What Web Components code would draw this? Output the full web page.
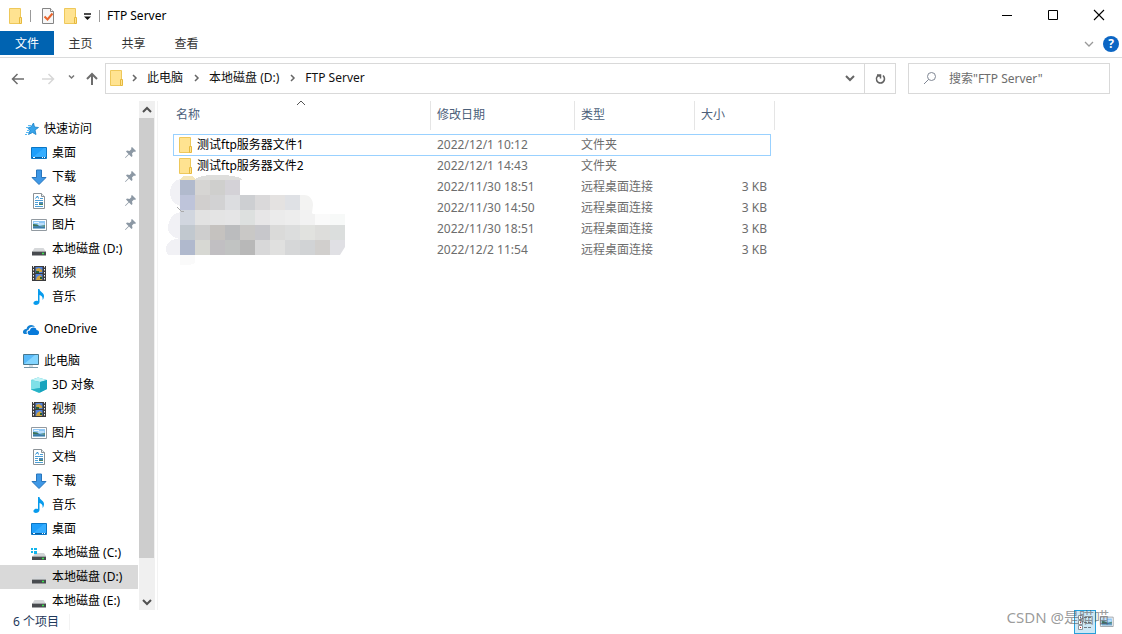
<!DOCTYPE html>
<html lang="zh-CN">
<head>
<meta charset="utf-8">
<title>FTP Server</title>
<style>
html, body { height: 100%; margin: 0; }
body { font: 12px/16px "Noto Sans", "Noto Sans CJK SC", sans-serif; color: #000; background: #fff; overflow: hidden; }
</style>
</head>
<body>
<explorer-window></explorer-window>
<script>
const ICONS = {
  folder: '<path d="M2.500 .5h11v15h-11z" fill="#ffe391" stroke="#eec85a"/><path d="M12.500 9.500h2v6h-2z" fill="#ffe391" stroke="#e6b93d"/>',
  check: '<path d="M2.500 .5h8l3 3v12h-11z" fill="#f7f7f7" stroke="#858585"/><path d="M10.500 .5v3h3" fill="#fff" stroke="#858585"/><path d="M4.500 8.500l3 3 5-6" fill="none" stroke="#e8642c" stroke-width="2"/>',
  star: '<path d="M10.500 2l1 4 4 .5-3.500 2.500 1 4.500-3.500-2-4 2 1.500-4L4.500 6.500 8 6z" fill="#38a4ea" stroke="#1681c8" stroke-width=".8"/><path d="M5 4.500h3M3 6.500h3M4 9.500h2M3 11.500h3M2 13.500h2" stroke="#5ab9f3"/>',
  desktop: '<path d="M.5 2.500h15v11H.5z" fill="#1e9ffb" stroke="#0b76c4"/><path d="M1 13L13 3h2v10z" fill="#35adff"/><path d="M1 12.500h14" stroke="#0b5e9e"/><path d="M2 12.500h2M11 12.500h1M13 12.500h1" stroke="#fff"/>',
  download: '<path d="M5.500 1h5v7.500H15L8 15.500 1 8.500h4.500z" fill="#3f98e6" stroke="#2876bd"/>',
  document: '<path d="M2.500 .5h8l3 3v12h-11z" fill="#fff" stroke="#8b9297"/><path d="M10.500 .5v3h3" fill="#e9edef" stroke="#8b9297"/><path d="M9 5.500h3M4 7.500h8M4 9.500h3M4 11.500h3M4 13.500h8" stroke="#4b9ed6"/><path d="M4.500 5.500l2-2.500 1 2.500" fill="none" stroke="#238bd0"/><path d="M8 9h4v3H8z" fill="#4a8bb5"/><path d="M8 11h4v1H8z" fill="#48845a"/>',
  picture: '<path d="M.5 2.500h15v11H.5z" fill="#fff" stroke="#929aa1"/><path d="M2 4h12v8H2z" fill="#8fc7f5"/><path d="M3 5.500h5M7 7h6" stroke="#e8f5ff"/><path d="M2 7l4 .5 3 2H2z" fill="#3d7458"/><path d="M2 9.500l6-.5 6 1v2H2z" fill="#3c7ba8"/><path d="M2 11.500h12" stroke="#8db9d4"/><path d="M9 9l5-1v2z" fill="#568c78"/>',
  drive: '<path d="M3.500 7h9l2.500 4H1z" fill="#d6d8da"/><path d="M1 10.500h14v4H1z" fill="#484b4f"/><path d="M1 10.500h14" stroke="#a3a6a8"/><path d="M11 12.500h2" stroke="#38e44b" stroke-width="1.500"/>',
  driveC: '<path d="M4.500 8h8.500l2 3H2z" fill="#d0d3d5"/><path d="M1 11h14v4H1z" fill="#484b4f"/><path d="M1 11.500h14" stroke="#a3a6a8"/><path d="M11 13.500h2" stroke="#38e44b" stroke-width="1.500"/><path d="M0 3h2v2H0zM3 3h3v2H3zM0 6h2v2H0zM3 6h3v3H3z" fill="#12b5ed"/>',
  video: '<path d="M1 1h14v15H1z" fill="#3b3b3b"/><path d="M2.500 1v15M13.500 1v15" stroke="#f3f3f3" stroke-dasharray="1.500 1.500"/><path d="M4.500 2h7v6h-7zM4.500 9h7v6h-7z" fill="#5484dc"/><path d="M5 4l3-1 3 2v2H6zM6 12l3-2 2 2v3H5z" fill="#d0a43d"/><path d="M5 6h3v2H5zM9 12h2v2H9z" fill="#275f37"/>',
  music: '<path d="M7 0h1.500c0 3 4.500 3.500 4.500 7 0 1.500-.5 3-1.500 4 .6-3-1-4.500-3-5v7c0 3-5.500 4-6 1.500-.5-2 2-3.500 4.500-2.500z" fill="#079bed"/>',
  onedrive: '<path d="M0 12C-.5 9 2 7.500 3.500 8 4 3.500 10 2.500 12 6 8 5 6 6.500 5.500 9 3 9 3.500 12 4 13H2C1 13 .5 12.500 0 12z" fill="#1481d3"/><path d="M5 13c-1-2 0-3.500 2-3.500 0-3.500 6-4 6.500-.5 3 0 3.500 4 1 5H7c-1 0-1.500-.5-2-1z" fill="#087ada"/>',
  pc: '<path d="M.5 1.500h15v10H.5z" fill="#58bafa" stroke="#49788e"/><path d="M1 11L12 2h3v9z" fill="#83d5ff"/><path d="M6 12h4v2H6z" fill="#d5dee3"/><path d="M1 14.500h14" stroke="#7896a6"/>',
  cube: '<path d="M0 3L7 .5 16 3v9l-8 4-8-3.500z" fill="#33bed0"/><path d="M0 3L7 .5 16 3 9 5z" fill="#c2f3f6"/><path d="M9 5l7-2v9l-7 3.500z" fill="#16a3bd"/><path d="M0 3l9 2v6L0 12.500z" fill="#7fe0e8"/><path d="M0 12.500L9 11v4.500z" fill="#27b2c6"/>',
  pin: '<path d="M10 2l4 4-1 1-1-.5L10 8.500l.5 2.500-1 1L7 9.500 3.500 13 3 12.500 6.500 9 4 6.500l1-1 2.500.5 2-2L9 3z" fill="#8c98a4"/>',
  back: '<path d="M2.500 8h11.500M7.500 3L2.500 8l5 5" fill="none" stroke="#6d6d6d" stroke-width="1.500"/>',
  forward: '<path d="M2 8h11.500M8.500 3l5 5-5 5" fill="none" stroke="#d7d7d7" stroke-width="1.500"/>',
  up: '<path d="M8 14V3M3 8l5-5 5 5" fill="none" stroke="#6d6d6d" stroke-width="2"/>',
  down: '<path d="M4 6l4 4 4-4" fill="none" stroke="currentColor" stroke-width="2"/>',
  downThin: '<path d="M4 6l4 4 4-4" fill="none" stroke="#999" stroke-width="1.300"/>',
  upThin: '<path d="M4 10l4-4 4 4" fill="none" stroke="#555"/>',
  right: '<path d="M6 5l3 3-3 3" fill="none" stroke="#666" stroke-width="1.500"/>',
  scrollUp: '<path d="M4 10l4-4 4 4" fill="none" stroke="#505050" stroke-width="2"/>',
  refresh: '<path d="M11 4.500c3 3 1 7.500-2.500 7.500C5 12 3 8 5.500 5H9M5 4h3.500v3.500" fill="none" stroke="#626262" stroke-width="1.500"/>',
  search: '<circle cx="9.500" cy="5.500" r="4" fill="none" stroke="#808794"/><path d="M6.500 8.500L2 13" stroke="#808794"/>',
  caret: '<path d="M5 6h7" stroke="#111" stroke-width="1.500"/><path d="M5 8.500h7L8.500 12z" fill="#111"/>',
  min: '<path d="M3 7.500h10" stroke="#000"/>',
  max: '<path d="M3.500 2.500h9v9h-9z" fill="none" stroke="#000"/>',
  close: '<path d="M3 2l10 10M13 2L3 12" stroke="#000" stroke-width="1.100"/>',
  details: '<path d="M1.500 1.500h4v4h-4zM1.500 6.500h4v4h-4zM1.500 11.500h4v4h-4z" fill="#fff" stroke="#89949c"/><path d="M7 3.500h3m1 0h3M7 8.500h3m1 0h3M7 13.500h3m1 0h3" stroke="#6f7a82"/><path d="M3 3h1v1H3z" fill="#2a79c4"/><path d="M3 8h1v1H3zM3 13h1v1H3z" fill="#c42a2a"/>'
};
ICONS.thumbs = '<g transform="translate(1 1) scale(.85)">' + ICONS.picture + '</g>';

const BASE = '*{box-sizing:border-box}button{font:inherit;color:inherit;border:0;padding:0;margin:0;background:none}a{color:inherit;text-decoration:none}';

class Base extends HTMLElement {
  connectedCallback() {
    if (this.shadowRoot) return;
    this.attachShadow({ mode: 'open' }).innerHTML = '<style>' + BASE + this.css() + '</style>' + this.html();
  }
}

class WinIcon extends Base {
  css() { return ':host{display:block;flex:none;width:16px;height:16px}svg{display:block}'; }
  html() { return '<svg width="16" height="16" viewBox="0 0 16 16" aria-hidden="true">' + ICONS[this.getAttribute('name')] + '</svg>'; }
}
customElements.define('win-icon', WinIcon);

class TitleBar extends Base {
  css() { return `
    :host{display:flex;align-items:center;height:31px;padding-left:7px}
    i{width:1px;height:12px;background:#999}
    h1{font:inherit;margin:0 auto 0 7px}
    .first{margin-right:7px}.check{margin:0 6px 0 9px}.caret{margin:0 4px 0 1px}
    .window{width:46px;height:31px;display:grid;place-items:center}`; }
  html() { return `
    <win-icon class="first" name="folder"></win-icon><i></i>
    <win-icon class="check" name="check"></win-icon><win-icon name="folder"></win-icon>
    <button class="caret" aria-label="自定义快速访问工具栏"><win-icon name="caret"></win-icon></button><i></i>
    <h1><slot></slot></h1>
    <button class="window" aria-label="最小化"><win-icon name="min"></win-icon></button>
    <button class="window" aria-label="最大化"><win-icon name="max"></win-icon></button>
    <button class="window" aria-label="关闭"><win-icon name="close"></win-icon></button>`; }
}
customElements.define('title-bar', TitleBar);

class RibbonTabs extends Base {
  css() { return `
    :host{display:flex;align-items:flex-start;height:27px;border-bottom:1px solid #dadbdc;color:#333}
    button{height:24px;width:53px;padding-top:1px}
    .file{width:54px;background:#0063b1;color:#fff}
    .tools{margin-left:auto;display:flex;align-items:center;gap:6px;height:26px;padding-right:3px}
    .tools button{width:auto;height:auto;padding:0}
    .help{width:16px!important;height:16px!important;border-radius:50%;background:#0c66c4;color:#fff;font-weight:700;line-height:16px}`; }
  html() { return `
    <button class="file">文件</button><button>主页</button><button>共享</button><button>查看</button>
    <div class="tools"><button aria-label="展开功能区"><win-icon name="downThin"></win-icon></button><button class="help">?</button></div>`; }
}
customElements.define('ribbon-tabs', RibbonTabs);

class AddressBar extends Base {
  css() { return `
    :host{display:flex;align-items:center;padding:5px 12px 6px 10px}
    .nav{display:flex;align-items:center;width:95px}
    .nav button+button{margin-left:14px}.nav button.small{margin-left:8px}.nav button.up{margin-left:6px}
    .path{flex:1;display:flex;align-items:stretch;height:31px;border:1px solid #d9d9d9}
    nav{flex:1;display:flex;align-items:center;padding:0 6px 1px 2px;color:#111}
    nav a{margin:0 6px 0 4px}
    nav win-icon+win-icon{margin-left:3px}
    nav button{margin-left:auto;color:#666}
    .refresh{width:31px;border-left:1px solid #d9d9d9;display:grid;place-items:center}
    label{display:flex;align-items:center;gap:11px;width:202px;height:31px;margin-left:12px;padding-left:13px;border:1px solid #d9d9d9}
    input{font:inherit;border:0;outline:0;padding:0;width:150px;background:none}
    input::placeholder{color:#6d6d6d;opacity:1}`; }
  html() { return `
    <div class="nav"><button aria-label="后退"><win-icon name="back"></win-icon></button><button aria-label="前进"><win-icon name="forward"></win-icon></button>
    <button class="small" aria-label="最近浏览的位置"><svg width="14" height="16" viewBox="0 0 14 16"><path d="M5 6.500l2.500 2.500L10 6.500" fill="none" stroke="#777" stroke-width="1.500"/></svg></button><button class="up" aria-label="上移"><win-icon name="up"></win-icon></button></div>
    <div class="path"><nav><win-icon name="folder"></win-icon><win-icon name="right"></win-icon><a href="#">此电脑</a><win-icon name="right"></win-icon><a href="#">本地磁盘 (D:)</a><win-icon name="right"></win-icon><a href="#">FTP Server</a>
    <button aria-label="以前的位置"><win-icon name="down"></win-icon></button></nav><button class="refresh" aria-label="刷新"><win-icon name="refresh"></win-icon></button></div>
    <label><win-icon name="search"></win-icon><input type="text" placeholder='搜索"FTP Server"' aria-label="搜索"></label>`; }
}
customElements.define('address-bar', AddressBar);

class TreeItem extends Base {
  css() { return `
    :host{display:block}
    a{display:flex;align-items:center;height:24px;padding:0 0 0 31px;white-space:nowrap}
    a span{margin:0 auto 0 5px}
    :host([root]) a{padding-left:23px}
    :host([root]:not(:first-child)){margin-top:8px}
    :host([selected]) a{background:#d9d9d9}`; }
  html() { return `<a href="#"><win-icon name="${this.getAttribute('icon')}"></win-icon><span><slot></slot></span>${this.hasAttribute('pinned') ? '<win-icon name="pin"></win-icon>' : ''}</a>`; }
}
customElements.define('tree-item', TreeItem);

class FolderTree extends Base {
  css() { return `
    :host{display:flex;width:158px;flex:none;min-height:0;border-right:1px solid #f3f3f3}
    nav{width:138px;padding-top:16px;overflow:hidden}
    .scroll{width:16px;margin-left:1px;display:flex;flex-direction:column;background:#f0f0f0}
    .scroll button{height:17px;color:#505050}
    .track{flex:1;display:flex;flex-direction:column;padding-right:1px}
    .thumb{flex:25;background:#cdcdcd}
    .rest{flex:2}`; }
  html() { return `<nav><slot></slot></nav>
    <div class="scroll"><button aria-label="向上滚动"><win-icon name="scrollUp"></win-icon></button><div class="track"><div class="thumb"></div><div class="rest"></div></div><button aria-label="向下滚动"><win-icon name="down"></win-icon></button></div>`; }
}
customElements.define('folder-tree', FolderTree);

const MOSAIC = [
  [180, ['#b1bacd', '#d6d5d3', '#cfcfcd', '#d4d2d7']],
  [195, ['#bec4da', '#d1cfce', '#d2d2d3', '#dcdde0', '#cdcfd2', '#dad9da', '#e4e2e1', '#dfe1e5', '#f3f3f2']],
  [210, ['#d1d6df', '#e2e2e2', '#e4e4e4', '#e5e5e6', '#dde0df', '#e7e6e7', '#ebebeb', '#ededed', '#f2f2f2', '#fafafa', '#f7f9f8']],
  [225, ['#c1c8cf', '#cecece', '#c5c2bf', '#bbbcbe', '#c9c8c6', '#c7c7cb', '#dadad9', '#dcdddd', '#e1e2df', '#dddddb', '#dbdedd']],
  [240, ['#b0b9cd', '#d7d8d3', '#c1bfc2', '#c1c3c2', '#b8b8b8', '#d8d8d9', '#e0e0df', '#d6d7d8', '#d1d3d5', '#d1cfcd', '#e0e0e4']]
];

class PixelMask extends Base {
  css() { return ':host{display:block;width:180px;height:92px;pointer-events:none}svg{display:block}'; }
  html() {
    let cells = '';
    for (const [y, row] of MOSAIC) row.forEach((c, i) => { cells += `<path d="M${180 + i * 15} ${y}h15v15h-15z" fill="${c}"/>`; });
    return `<svg width="180" height="92" viewBox="166 174 180 92" shape-rendering="crispEdges" aria-hidden="true">
      <defs><clipPath id="edge"><path d="M166 174h76v21h62c6 0 9 5 9 10l-1 8 1 1h32v33l-5 8H180z"/></clipPath></defs>
      <path d="M180 179c-8 1-10 9-10 14 0 6 4 11 10 13zM180 212c-8 1-12 9-12 16 0 5 3 9 12 11zM180 239c-10-1-14 5-14 10 0 4 1 6 4 6h10z" fill="#f1f1f5"/>
      <path d="M180 179l3-3h9l4 3v1h-16z" fill="#f3e6bc"/><path d="M195 180c0-7 44-7 48 0z" fill="#dededc"/>
      <path d="M180 255h15v8l-6 2h-9z" fill="#fafafa"/>
      <g clip-path="url(#edge)">${cells}</g><path d="M177 207l4 4h3" fill="none" stroke="#aaa"/></svg>`;
  }
}
customElements.define('pixel-mask', PixelMask);

const FILES = [
  ['测试ftp服务器文件1', '2022/12/1 10:12', '文件夹', ''],
  ['测试ftp服务器文件2', '2022/12/1 14:43', '文件夹', ''],
  ['', '2022/11/30 18:51', '远程桌面连接', '3 KB'],
  ['', '2022/11/30 14:50', '远程桌面连接', '3 KB'],
  ['', '2022/11/30 18:51', '远程桌面连接', '3 KB'],
  ['', '2022/12/2 11:54', '远程桌面连接', '3 KB']
];

class FileList extends Base {
  css() { return `
    :host{display:block;flex:1;position:relative;padding-left:15px;overflow:hidden}
    table{border-collapse:separate;border-spacing:0;table-layout:fixed;width:602px;color:#6d6d6d}
    .name{width:258px}.date{width:144px}.type{width:120px}.size{width:80px}
    th{position:relative;height:29px;padding:0 0 2px 3px;font-weight:400;text-align:left;color:#4c607a;border-right:1px solid #e5e5e5}
    th:not(:first-child){padding-left:6px}
    th win-icon{position:absolute;left:120px;top:-6px}
    tbody::before{content:"";display:block;height:4px}
    td{height:21px;padding:0 0 0 6px;white-space:nowrap}
    td:first-child{padding-left:4px}
    td:last-child{text-align:right;padding-right:8px}
    .file{display:flex;align-items:center;gap:4px;color:#000}
    tbody tr:first-child{position:relative}
    tbody tr:first-child::after{content:"";position:absolute;inset:0 4px -1px 0;border:1px solid #99d1ff}
    pixel-mask{position:absolute;left:8px;top:73px}`; }
  html() {
    const rows = FILES.map(([n, d, t, s]) => `<tr><td>${n ? `<a class="file" href="#"><win-icon name="folder"></win-icon>${n}</a>` : ''}</td><td>${d}</td><td>${t}</td><td>${s}</td></tr>`).join('');
    return `<table><colgroup><col class="name"><col class="date"><col class="type"><col class="size"></colgroup>
      <thead><tr><th>名称<win-icon name="upThin"></win-icon></th><th>修改日期</th><th>类型</th><th>大小</th></tr></thead><tbody>${rows}</tbody></table><pixel-mask></pixel-mask>`;
  }
}
customElements.define('file-list', FileList);

class StatusBar extends Base {
  css() { return `
    :host{display:flex;height:24px;align-items:center;padding:0 4px 0 13px;color:#1e395b;position:relative}
    span{margin-right:auto;padding-right:10px;border-right:1px solid #f3f3f3}
    .view{width:22px;height:24px;display:grid;place-items:center}
    .on{background:#cce8f6;border:1px solid #26a0da}
    .mark{position:absolute;right:13px;bottom:7px;margin:0;font-size:15px;line-height:20px;color:rgba(90,90,90,.62)}`; }
  html() { return `<span><slot></slot></span><button class="view on" aria-label="详细信息"><win-icon name="details"></win-icon></button><button class="view" aria-label="大图标"><win-icon name="thumbs"></win-icon></button><div class="mark">CSDN @是瞄喵</div>`; }
}
customElements.define('status-bar', StatusBar);

class ExplorerWindow extends Base {
  css() { return `:host{display:flex;flex-direction:column;height:100vh}
    main{flex:1;display:flex;min-height:0;padding-top:1px}`; }
  html() { return `<title-bar>FTP Server</title-bar><ribbon-tabs></ribbon-tabs><address-bar></address-bar>
    <main><folder-tree>
      <tree-item root icon="star">快速访问</tree-item>
      <tree-item icon="desktop" pinned>桌面</tree-item>
      <tree-item icon="download" pinned>下载</tree-item>
      <tree-item icon="document" pinned>文档</tree-item>
      <tree-item icon="picture" pinned>图片</tree-item>
      <tree-item icon="drive">本地磁盘 (D:)</tree-item>
      <tree-item icon="video">视频</tree-item>
      <tree-item icon="music">音乐</tree-item>
      <tree-item root icon="onedrive">OneDrive</tree-item>
      <tree-item root icon="pc">此电脑</tree-item>
      <tree-item icon="cube">3D 对象</tree-item>
      <tree-item icon="video">视频</tree-item>
      <tree-item icon="picture">图片</tree-item>
      <tree-item icon="document">文档</tree-item>
      <tree-item icon="download">下载</tree-item>
      <tree-item icon="music">音乐</tree-item>
      <tree-item icon="desktop">桌面</tree-item>
      <tree-item icon="driveC">本地磁盘 (C:)</tree-item>
      <tree-item icon="drive" selected>本地磁盘 (D:)</tree-item>
      <tree-item icon="drive">本地磁盘 (E:)</tree-item>
    </folder-tree><file-list></file-list></main>
    <status-bar>6 个项目</status-bar>`; }
}
customElements.define('explorer-window', ExplorerWindow);
</script>
</body>
</html>
